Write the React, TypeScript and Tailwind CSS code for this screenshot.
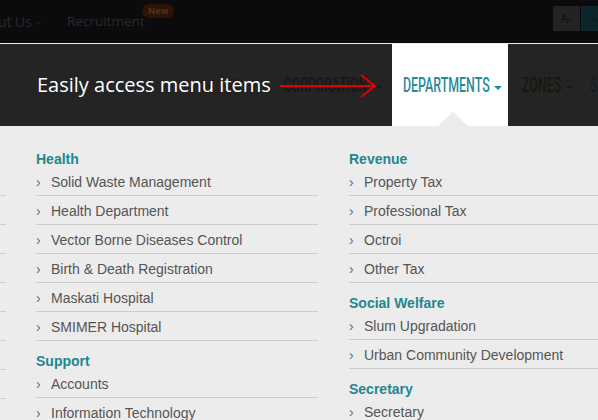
import { ChevronDown } from "lucide-react";

type Section = { title: string; items: string[] };

const leftCol: Section[] = [
  {
    title: "Health",
    items: [
      "Solid Waste Management",
      "Health Department",
      "Vector Borne Diseases Control",
      "Birth & Death Registration",
      "Maskati Hospital",
      "SMIMER Hospital",
    ],
  },
  { title: "Support", items: ["Accounts", "Information Technology"] },
];

const rightCol: Section[] = [
  { title: "Revenue", items: ["Property Tax", "Professional Tax", "Octroi", "Other Tax"] },
  { title: "Social Welfare", items: ["Slum Upgradation", "Urban Community Development"] },
  { title: "Secretary", items: ["Secretary"] },
];

const condensed = { fontFamily: "Roboto, 'DejaVu Sans', sans-serif" };

function Column({ sections }: { sections: Section[] }) {
  return (
    <div className="w-[282px] shrink-0">
      {sections.map((s, i) => (
        <div key={s.title} className={i > 0 ? "mt-[12px]" : ""}>
          <h4 className="text-[14px] leading-[16px] font-bold text-[#1f8790]">{s.title}</h4>
          <ul>
            {s.items.map((it) => (
              <li key={it} className="flex pt-[5px] pb-[3px] border-b border-[#cdcdcd] text-[14px] leading-[20px] text-[#555555]">
                <span className="w-[15px] text-[#6a6a6a]">›</span>
                <span>{it}</span>
              </li>
            ))}
          </ul>
        </div>
      ))}
    </div>
  );
}

export default function App() {
  return (
    <div className="w-[598px] h-[420px] overflow-hidden bg-[#ececec]" style={{ fontFamily: "'Liberation Sans', Arial, sans-serif" }}>
      {/* top utility bar */}
      <div className="h-[43px] bg-[#0b0b0d] flex items-center" style={{ fontFamily: "'Open Sans', sans-serif" }}>
        <div className="w-[32px] flex justify-end whitespace-nowrap text-[14px] text-[#2a2a2a]">About Us</div>
        <ChevronDown size={10} strokeWidth={2} className="ml-[1px] mt-[2px] text-[#2a2a2a]" />
        <div className="relative ml-[24px] text-[13.5px] text-[#2a2a2a]">
          Recruitment
          <span className="absolute -top-[7px] left-[75px] rounded-full bg-[#2e1205] px-[6px] leading-[14px] text-[9px] font-bold text-[#4b3527]">New</span>
        </div>
        <div className="ml-auto mr-[-10px] flex gap-[1px] self-start mt-[6px]">
          <button className="w-[27px] h-[25px] bg-[#232323] text-[12px] text-[#0e0e0e]">A-</button>
          <button className="w-[27px] h-[25px] bg-[#0c262c] text-[12px] text-[#0a1a1e]">A</button>
        </div>
      </div>

      {/* main nav */}
      <div className="h-[82px] bg-[#242424] flex items-stretch mt-[1px]">
        <div className="w-[282px] shrink-0 flex items-center pl-[37px] relative whitespace-nowrap">
          <span className="absolute left-[200px] top-[28px] text-[20px] text-[#2b1818] origin-left scale-x-[0.62] inline-block" style={condensed}>ABOUT</span>
          <span className="relative text-[20px] text-white" style={{ fontFamily: "'Open Sans', sans-serif" }}>Easily access menu items</span>
        </div>
        <div className="w-[110px] shrink-0 flex items-center relative">
          <span className="ml-[2px] text-[20px] font-medium text-[#1d1414] origin-left scale-x-[0.61] inline-block whitespace-nowrap" style={condensed}>
            CORPORATION
          </span>
          <span className="absolute left-[94px] top-[42px] w-0 h-0 border-l-[3px] border-r-[3px] border-t-[3px] border-transparent border-t-[#1d1414]" />
          <svg className="absolute left-[-2px] top-[30px]" width="98" height="24" viewBox="0 0 98 24" fill="none">
            <path d="M0 12 H95" stroke="#e00000" strokeWidth="2" />
            <path d="M81 1 L95 12 L81 23" stroke="#e00000" strokeWidth="2" />
          </svg>
        </div>
        <div className="w-[116px] shrink-0 bg-white flex items-center relative">
          <span className="ml-[11px] text-[20px] font-medium text-[#2a8b97] origin-left scale-x-[0.62] inline-block whitespace-nowrap" style={condensed}>
            DEPARTMENTS
          </span>
          <span className="absolute left-[102px] top-[42px] w-0 h-0 border-l-[4px] border-r-[4px] border-t-[4px] border-transparent border-t-[#2a8b97]" />
          <span className="absolute bottom-0 left-[46px] w-0 h-0 border-l-[15px] border-r-[15px] border-b-[14px] border-transparent border-b-[#ececec]" />
        </div>
        <div className="flex items-center relative pl-[14px] whitespace-nowrap">
          <span className="text-[20px] font-medium text-[#121a0f] origin-left scale-x-[0.62] inline-block" style={condensed}>ZONES</span>
          <span className="absolute left-[58px] top-[42px] w-0 h-0 border-l-[3px] border-r-[3px] border-t-[3px] border-transparent border-t-[#121a0f]" />
          <span className="absolute left-[82px] text-[20px] font-medium text-[#151a2a] origin-left scale-x-[0.62] inline-block" style={condensed}>SERVICES</span>
        </div>
      </div>

      {/* mega menu panel */}
      <div className="flex pt-[25px]">
        <div className="w-[282px] shrink-0 ml-[-276px] pt-[16px]">
          {Array.from({ length: 8 }).map((_, i) => (
            <div key={i} className="h-[29px] border-b border-[#cdcdcd]" />
          ))}
        </div>
        <div className="ml-[30px]">
          <Column sections={leftCol} />
        </div>
        <div className="ml-[31px]">
          <Column sections={rightCol} />
        </div>
      </div>
    </div>
  );
}
